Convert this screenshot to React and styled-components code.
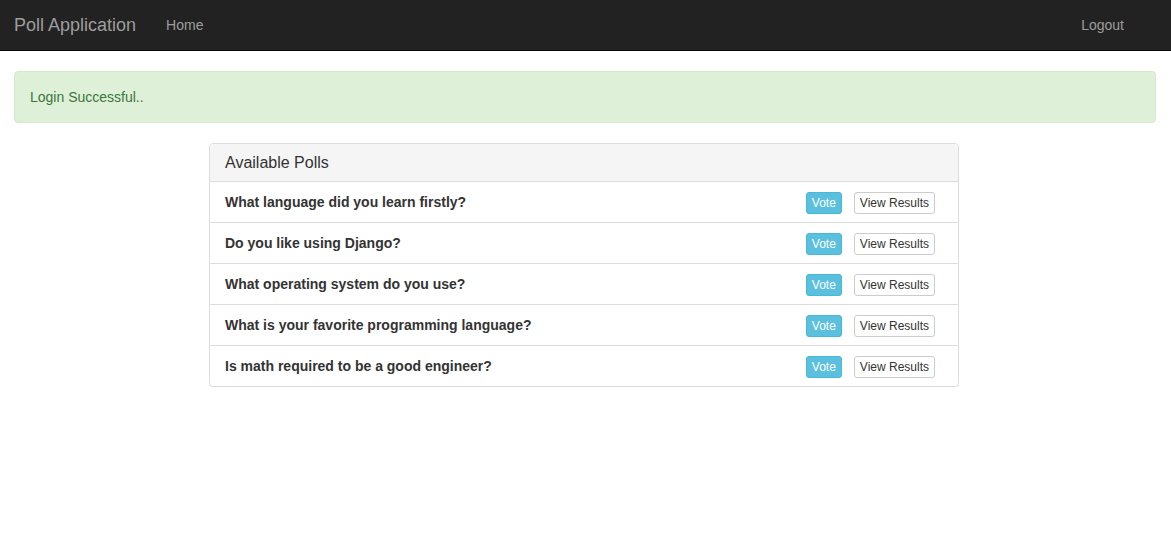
import React from "react";
import styled, { createGlobalStyle } from "styled-components";

const Global = createGlobalStyle`
  html, body { margin: 0; padding: 0; background: #fff; }
  body {
    font-family: "Liberation Sans", Arial, Helvetica, sans-serif;
    font-size: 14px;
    line-height: 20px;
    color: #333;
  }
  * { box-sizing: border-box; }
`;

const Navbar = styled.nav`
  background: #222;
  border-bottom: 1px solid #080808;
  height: 51px;
  display: flex;
  align-items: center;
  padding: 0 47px 0 14px;
`;

const Brand = styled.a`
  font-size: 18px;
  color: #9d9d9d;
  text-decoration: none;
  line-height: 20px;
  margin-right: 30px;
`;

const NavLink = styled.a`
  font-size: 14px;
  color: #9d9d9d;
  text-decoration: none;
  line-height: 20px;
  margin-left: ${(p) => (p.$right ? "auto" : "0")};
`;

const Main = styled.main`
  padding: 20px 15px 0 14px;
`;

const Alert = styled.div`
  background: #dff0d8;
  border: 1px solid #d6e9c6;
  color: #3c763d;
  border-radius: 4px;
  padding: 15px;
  line-height: 20px;
  height: 52px;
  margin-bottom: 20px;
`;

const Panel = styled.section`
  width: 750px;
  margin: 0 auto;
  position: relative;
  left: -1px;
  border: 1px solid #ddd;
  border-radius: 4px;
  box-shadow: 0 1px 1px rgba(0, 0, 0, 0.05);
  background: #fff;
`;

const PanelHeading = styled.div`
  background: #f5f5f5;
  border-bottom: 1px solid #ddd;
  border-radius: 3px 3px 0 0;
  padding: 8px 15px;
  font-size: 16px;
  line-height: 20px;
  height: 38px;
  display: flex;
  align-items: center;
  color: #333;
`;

const Row = styled.div`
  display: flex;
  align-items: center;
  height: ${(p) => (p.$first ? "40px" : "41px")};
  padding: 0 23px 0 15px;
  border-top: ${(p) => (p.$first ? "none" : "1px solid #ddd")};
`;

const Question = styled.span`
  font-weight: bold;
  font-size: 14px;
  color: #333;
  flex: 1;
`;

const Btn = styled.button`
  font-family: inherit;
  font-size: 12px;
  line-height: 18px;
  padding: 1px 5px;
  border-radius: 3px;
  border: 1px solid ${(p) => (p.$info ? "#46b8da" : "#ccc")};
  background: ${(p) => (p.$info ? "#5bc0de" : "#fff")};
  color: ${(p) => (p.$info ? "#fff" : "#333")};
  margin-left: ${(p) => (p.$info ? "0" : "12px")};
  cursor: pointer;
  height: 22px;
  position: relative;
  top: 1px;
`;

const polls = [
  "What language did you learn firstly?",
  "Do you like using Django?",
  "What operating system do you use?",
  "What is your favorite programming language?",
  "Is math required to be a good engineer?",
];

export default function App() {
  return (
    <>
      <Global />
      <Navbar>
        <Brand href="#">Poll Application</Brand>
        <NavLink href="#">Home</NavLink>
        <NavLink href="#" $right>Logout</NavLink>
      </Navbar>
      <Main>
        <Alert>Login Successful..</Alert>
        <Panel>
          <PanelHeading>Available Polls</PanelHeading>
          {polls.map((q, i) => (
            <Row key={q} $first={i === 0}>
              <Question>{q}</Question>
              <Btn $info>Vote</Btn>
              <Btn>View Results</Btn>
            </Row>
          ))}
        </Panel>
      </Main>
    </>
  );
}
